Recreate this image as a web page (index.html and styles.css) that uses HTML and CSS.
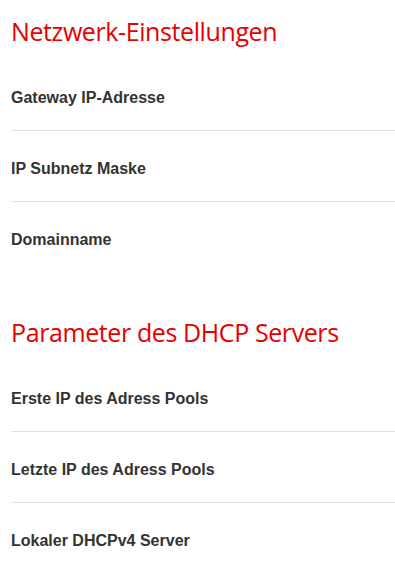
FILE: index.html
```html
<!DOCTYPE html>
<html lang="de">
<head>
<meta charset="utf-8">
<link rel="stylesheet" href="styles.css">
</head>
<body>
<section class="group">
  <h2 class="title">Netzwerk-Einstellungen</h2>
  <ul class="list">
    <li class="row">Gateway IP-Adresse</li>
    <li class="row">IP Subnetz Maske</li>
    <li class="row">Domainname</li>
  </ul>
</section>
<section class="group">
  <h2 class="title">Parameter des DHCP Servers</h2>
  <ul class="list">
    <li class="row">Erste IP des Adress Pools</li>
    <li class="row">Letzte IP des Adress Pools</li>
    <li class="row">Lokaler DHCPv4 Server</li>
  </ul>
</section>
</body>
</html>
```
FILE: styles.css
```css
html, body {
  margin: 0;
  padding: 0;
  background: #ffffff;
}
body {
  padding-left: 11px;
}
.title {
  margin: 0;
  padding-top: 15px;
  font-family: "Open Sans", "Noto Sans", sans-serif;
  font-weight: 400;
  font-size: 25px;
  line-height: 32px;
  color: #e60000;
  letter-spacing: -0.4px;
}
.list {
  list-style: none;
  margin: 0;
  padding: 13px 0 0;
}
.row {
  font-family: "Liberation Sans", Arial, sans-serif;
  font-weight: 700;
  font-size: 16px;
  line-height: 18px;
  color: #333333;
  padding: 29px 0 23px;
  border-bottom: 1px solid #e2e2e2;
}
.row:last-child {
  border-bottom: none;
}
.group + .group {
  margin-top: 29px;
}
```
